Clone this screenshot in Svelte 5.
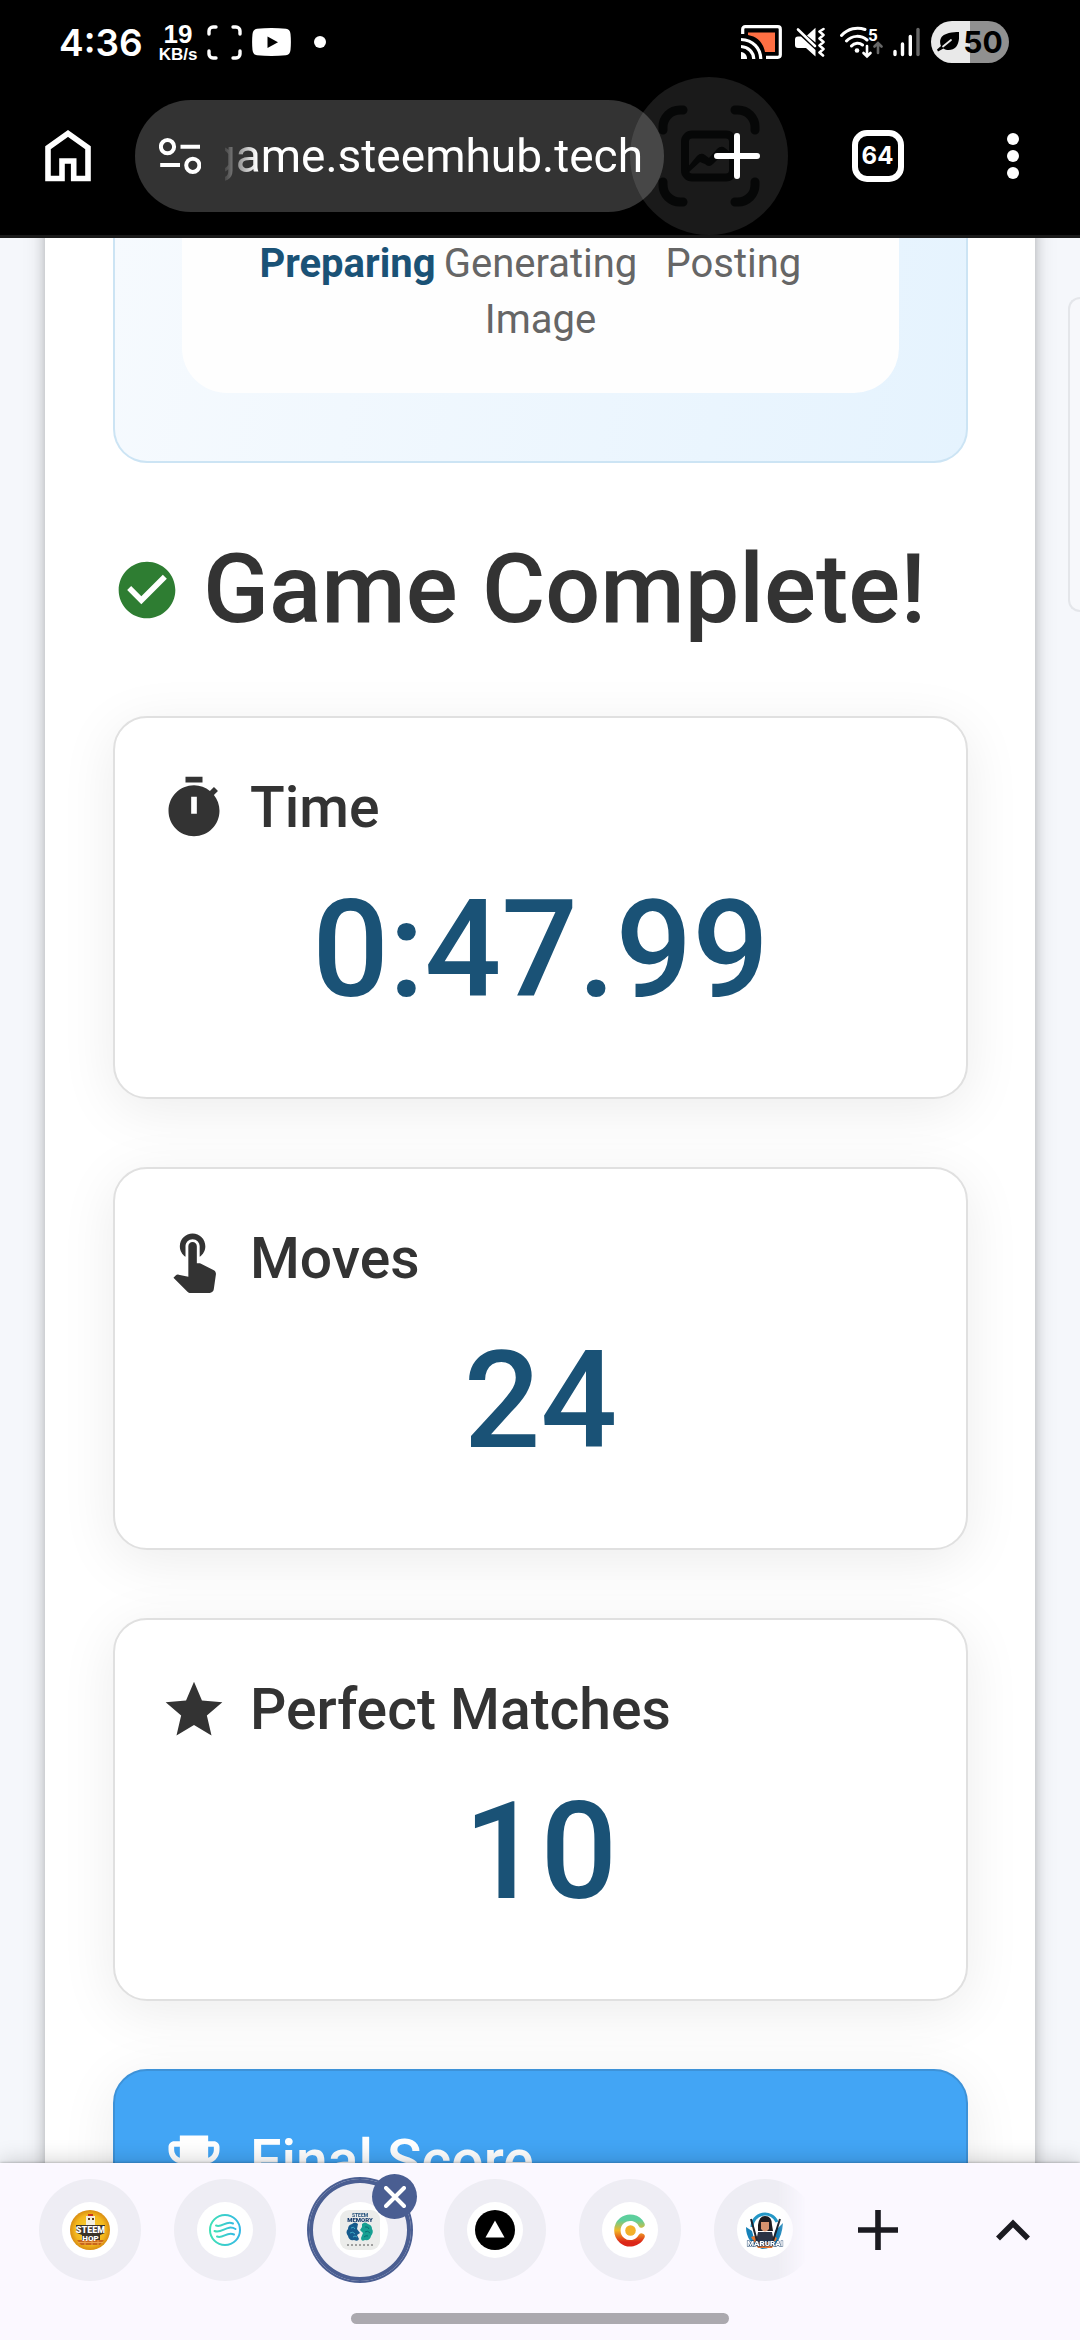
<script>
    let url = 'game.steemhub.tech';
    let openTabs = 64;

    const stats = [
        { icon: 'timer', label: 'Time', value: '0:47.99' },
        { icon: 'touch', label: 'Moves', value: '24' },
        { icon: 'star', label: 'Perfect Matches', value: '10' },
        { icon: 'trophy', label: 'Final Score', value: '', highlight: true }
    ];

    const paths = {
        timer: 'M9 1h6v2H9zM19.03 7.39l1.42-1.42c-.43-.51-.9-.99-1.41-1.41l-1.42 1.42C16.07 4.74 14.12 4 12 4c-4.97 0-9 4.03-9 9s4.02 9 9 9 9-4.03 9-9c0-2.12-.74-4.07-1.97-5.61zM13 14h-2V8h2z',
        touch: 'M9 11.24V7.5C9 6.12 10.12 5 11.5 5S14 6.12 14 7.5v3.74c1.21-.81 2-2.18 2-3.74C16 5.01 13.99 3 11.5 3S7 5.01 7 7.5c0 1.56.79 2.93 2 3.74zm9.84 4.63l-4.54-2.26c-.17-.07-.35-.11-.54-.11H13v-6c0-.83-.67-1.5-1.5-1.5S10 6.67 10 7.5v10.74l-3.43-.72c-.08-.01-.15-.03-.24-.03-.31 0-.59.13-.79.33l-.79.8 4.94 4.94c.27.27.65.44 1.06.44h6.79c.75 0 1.33-.55 1.44-1.28l.75-5.27c.01-.07.02-.14.02-.2 0-.62-.38-1.16-.91-1.38z',
        star: 'M12 17.27L18.18 21l-1.64-7.03L22 9.24l-7.19-.61L12 2 9.19 8.63 2 9.24l5.46 4.73L5.82 21z',
        trophy: 'M19 5h-2V3H7v2H5c-1.1 0-2 .9-2 2v1c0 2.55 1.92 4.63 4.39 4.94.63 1.5 1.98 2.63 3.61 2.96V19H7v2h10v-2h-4v-3.1c1.63-.33 2.98-1.46 3.61-2.96C19.08 12.63 21 10.55 21 8V7c0-1.1-.9-2-2-2zM5 8V7h2v3.82C5.84 10.4 5 9.3 5 8zm14 0c0 1.3-.84 2.4-2 2.82V7h2v1z',
        check: 'M12 2C6.48 2 2 6.48 2 12s4.48 10 10 10 10-4.48 10-10S17.52 2 12 2zm-2 15l-5-5 1.41-1.41L10 14.17l7.59-7.59L19 8l-9 9z'
    };

    const tabs = ['hop', 'waves', 'memory', 'triangle', 'ring', 'samurai'];
    let active = 'memory';
</script>

<div class="screen">
    <header>
        <div class="status">
            <span class="clock">4:36</span>
            <span class="speed"><b>19</b><span>KB/s</span></span>
            <svg class="corners" width="35" height="35" viewBox="0 0 35 35" fill="none" stroke="#fff" stroke-width="3.4" stroke-linecap="round">
                <path d="M2 9V6a4 4 0 0 1 4-4h3M26 2h3a4 4 0 0 1 4 4v3M33 26v3a4 4 0 0 1-4 4h-3M9 33H6a4 4 0 0 1-4-4v-3" />
            </svg>
            <svg class="video" width="39" height="28" viewBox="0 0 39 28">
                <path fill="#fff" d="M5 .8Q19.500-.8 34 .8Q38 1.200 38.500 6Q39.300 14 38.500 22Q38 26.800 34 27.200Q19.500 28.800 5 27.200Q1 26.800 .5 22Q-.3 14 .5 6Q1 1.200 5 .8z" />
                <path d="M15.500 8.500v11.500L26 14.200z" />
            </svg>
            <span class="dot"></span>
            <span class="spacer"></span>
            <svg class="cast" width="41" height="34" viewBox="0 0 41 34" fill="none" stroke="#fff" stroke-width="3.2">
                <path d="M1.700 9V4.200A2.500 2.500 0 0 1 4.200 1.700H36.800A2.500 2.500 0 0 1 39.300 4.200V29.800A2.500 2.500 0 0 1 36.800 32.300H25" />
                <path fill="#ff6f43" stroke="none" d="M7 7.500H34V27H24C22 17 16 11.500 7 10z" />
                <path d="M0 14.500C12 15 19.500 23 19.800 34M0 21.500C7.500 22 12.500 27 12.800 34" />
                <path fill="#fff" stroke="none" d="M0 27C4 27.500 6 30 6 34H0z" />
            </svg>
            <svg class="mute" width="31" height="30" viewBox="0 0 31 30">
                <path fill="#fff" d="M0 12.500Q0 9.500 3 9.500H6L20.500 23V29.500L11 21H3Q0 21 0 18z" />
                <path fill="#fff" d="M12 8.500L20.500 .8V15.500z" />
                <path fill="none" stroke="#fff" stroke-width="2.600" stroke-linecap="round" d="M3 2.500L20 19" />
                <path fill="none" stroke="#fff" stroke-width="2.600" stroke-linejoin="round" stroke-linecap="round" d="M28.500 2L24.500 4.500L28.500 8L24.500 11.500L28.500 15L24.500 18.500L28.500 22L24.500 25.500L28 28.500" />
            </svg>
            <svg class="wifi" width="43" height="33" viewBox="0 0 43 33" fill="none" stroke="#fff" stroke-width="3" stroke-linecap="round">
                <path d="M1.500 9.500C8 2.500 17 .5 25 3.500M6.500 15C12 9 21 9 27 14M11.500 20C14.500 16.500 19.500 16.500 22.500 19" />
                <circle cx="17" cy="24.500" r="2.300" fill="#fff" stroke="none" />
                <path stroke-width="2.600" d="M27 20V30M23.500 27L27 30.500L30.500 27" />
                <path stroke="#666" stroke-width="2.600" d="M38 27V18M34.500 20.500L38 17L41.500 20.500" />
                <text x="28" y="15" fill="#fff" stroke="none" font-size="17" font-weight="700">5</text>
            </svg>
            <svg class="signal" width="27" height="30" viewBox="0 0 27 30" stroke="#fff" stroke-width="3.4" stroke-linecap="round">
                <path d="M2 24.500V27.500M9.500 17V27.500M17.300 9.500V27.500" />
                <path stroke="#666" d="M25 2.500V27.500" />
            </svg>
            <span class="battery">
                <svg width="22" height="20" viewBox="0 0 22 20">
                    <path d="M22 0C21 0 9 0 5 4.500C2.500 7.500 2.800 11.500 4 14L0 17.500L1 19.500L6.500 16.500C10 19 16 18.500 19 15C22 11.500 22.500 5 22 0z" />
                    <path fill="none" stroke="#e9e9e9" stroke-width="1.800" stroke-linecap="round" d="M6 14.500L14 8" />
                </svg>
                50
            </span>
        </div>

        <nav class="toolbar">
            <button class="tool" aria-label="Home">
                <svg width="46" height="52" viewBox="0 0 46 52" fill="none" stroke="#fff" stroke-width="5.6">
                    <path d="M3 48.500V17.800L23 3.500L43 17.800V48.500H28.700V31H17V48.500z" />
                </svg>
            </button>
            <div class="address">
                <button class="site" aria-label="Site information">
                    <svg width="42" height="36" viewBox="0 0 42 36" fill="none" stroke="#fff" stroke-width="4">
                        <circle cx="8.500" cy="8.700" r="6.600" />
                        <circle cx="33.800" cy="27.300" r="6.600" />
                        <path d="M21.500 8.700H41M1.200 27H21" />
                    </svg>
                </button>
                <input aria-label="Address" dir="rtl" bind:value={url}>
            </div>
            <button class="tool new" aria-label="New tab">
                <span class="capture">
                    <svg width="102" height="102" viewBox="0 0 102 102" fill="none" stroke="#060707" stroke-width="9" stroke-linecap="round">
                        <path d="M5 25V22A17 17 0 0 1 22 5H25M77 5H80A17 17 0 0 1 97 22V25M97 77V80A17 17 0 0 1 80 97H77M25 97H22A17 17 0 0 1 5 80V77" />
                        <rect x="27" y="29.500" width="48" height="43" rx="7" stroke-width="8" />
                        <path fill="#060707" stroke="none" d="M29 63L39 51Q43 47 47 50L51 53L59 44Q63 40 67 43L76 50V52L65 49L55 59Q51 63 47 59L42 57L31 67z" />
                    </svg>
                </span>
                <svg class="plus" width="46" height="46" viewBox="0 0 46 46" stroke="#fff" stroke-width="6" stroke-linecap="round">
                    <path d="M23 3V43M3 23H43" />
                </svg>
            </button>
            <button class="tool" aria-label="Open tabs"><span class="count">{openTabs}</span></button>
            <button class="tool" aria-label="Menu">
                <svg width="12" height="48" viewBox="0 0 12 48" fill="#fff">
                    <circle cx="6" cy="7" r="6" /><circle cx="6" cy="24" r="6" /><circle cx="6" cy="41" r="6" />
                </svg>
            </button>
        </nav>
    </header>

    <main>
        <section class="game">
            <div class="panel">
                <div class="steps">
                    <span class="current">Preparing</span>
                    <span>Generating Image</span>
                    <span>Posting</span>
                </div>
            </div>

            <h1>
                <svg class="icon done" viewBox="0 0 24 24"><path d={paths.check} /></svg>
                Game Complete!
            </h1>

            {#each stats as stat}
                <article class="card" class:highlight={stat.highlight}>
                    <h2>
                        <svg class="icon" viewBox="0 0 24 24"><path d={paths[stat.icon]} /></svg>
                        {stat.label}
                    </h2>
                    <p>{stat.value}</p>
                </article>
            {/each}
        </section>
        <aside></aside>
    </main>

    <footer>
        <div class="strip">
            <div class="tabs">
                {#each tabs as tab}
                    <button class="tab" class:active={tab == active} aria-label={tab} on:click={() => active = tab}>
                        <span class="favicon">
                            <svg width="40" height="40" viewBox="0 0 40 40">
                                {#if tab == 'hop'}
                                    <defs>
                                        <radialGradient id="gold">
                                            <stop offset="0" stop-color="#f7d63c" /><stop offset=".75" stop-color="#f3b71d" /><stop offset="1" stop-color="#d98d12" />
                                        </radialGradient>
                                    </defs>
                                    <circle cx="20" cy="20" r="20" fill="url(#gold)" />
                                    <path fill="#c9341f" d="M18 4h5v3h-5z" />
                                    <path fill="#f4efe0" d="M16 6h9v9h-9z" />
                                    <path fill="#59401c" d="M18 8h2v2h-2zM22 8h2v2h-2z" />
                                    <path fill="#3a3329" d="M6 15h29v8l-5 2v6H12v-6l-5-2z" />
                                    <path fill="#c9661b" d="M7 30h27l-4 5H11z" />
                                    <path stroke="#eda24a" d="M8 32.500H33M15 30v5M22 30v5M28 30v5" />
                                    <text x="20.500" y="23" font-size="9" font-weight="900" fill="#fff" text-anchor="middle">STEEM</text>
                                    <text x="20.500" y="30.500" font-size="8" font-weight="900" fill="#fff" text-anchor="middle">HOP</text>
                                {:else if tab == 'waves'}
                                    <defs>
                                        <linearGradient id="aqua"><stop offset="0" stop-color="#3fe0b5" /><stop offset="1" stop-color="#35b9e6" /></linearGradient>
                                    </defs>
                                    <g fill="none" stroke="url(#aqua)" stroke-width="2" stroke-linecap="round">
                                        <circle cx="20" cy="20" r="15" />
                                        <path d="M11 15.500C17 18 21 10 28 13.500M9.500 21C17 24 22 14 30.500 19M12 26.500C18 29 22 21 29 24.500" />
                                    </g>
                                {:else if tab == 'memory'}
                                    <rect width="40" height="40" rx="9" fill="#ebecea" />
                                    <text x="20" y="7" font-size="5" font-weight="700" fill="#1c4c78" text-anchor="middle">STEEM</text>
                                    <text x="20" y="12" font-size="6" font-weight="900" fill="#173c6b" text-anchor="middle">MEMORY</text>
                                    <path fill="#145a8c" d="M18 14Q15 11 12 14Q8 15 8 19Q5 22 8 26Q9 31 14 30Q18 32 19 29L17 25L20 23L17 19z" />
                                    <path fill="#17a092" d="M22 14Q25 11 28 14Q32 15 32 19Q34 22 31 26Q30 31 25 30Q21 32 21 28L23 23L20 20L22 17z" />
                                    <path fill="none" stroke="#3ca7c7" d="M11 18q3-2 4 1M10 23q3-2 5 1M13 27q2-2 4 0" />
                                    <path fill="none" stroke="#0c6f74" d="M25 17q3-1 4 2M25 22q3-2 5 1M24 27q2-2 4-1" />
                                    <path stroke="#555" stroke-dasharray="2 2" d="M7 35H33" />
                                {:else if tab == 'triangle'}
                                    <circle cx="20" cy="20" r="20" />
                                    <path fill="#fff" d="M20 10.500L29.500 27.500H10.500z" />
                                {:else if tab == 'ring'}
                                    <defs>
                                        <linearGradient id="sun" x2="0" y2="1">
                                            <stop offset=".1" stop-color="#5dcf9d" /><stop offset=".5" stop-color="#f2b625" /><stop offset=".95" stop-color="#dc2618" />
                                        </linearGradient>
                                    </defs>
                                    <path fill="none" stroke="url(#sun)" stroke-width="6.400" stroke-linecap="round" d="M31.500 14.500A12.800 12.800 0 1 0 31.500 26.500" />
                                    <circle cx="20.500" cy="20.500" r="5.300" fill="#f3b02a" />
                                {:else}
                                    <path fill="none" stroke="#2597c6" stroke-width="3" d="M7 17A13 13 0 0 1 32 12" />
                                    <path fill="#1681b8" d="M1 17Q1 33 17 39Q36 39 38 13L30 21Q29 32 20 33Q8 31 7 21z" />
                                    <path fill="#e8742b" d="M6 27Q13 24 19 29Q27 24 32 28L27 38H13z" />
                                    <path fill="#1d1a1f" d="M13 15Q14 6 20 6Q27 6 27 15L28 21H13z" />
                                    <path fill="#d6926f" d="M16 12h8v7q-4 5-8 0z" />
                                    <path fill="#2b3345" d="M13 22h14l2 10H11z" />
                                    <path stroke="#1e222d" stroke-width="2" d="M6 9L12 31M35 9L28 31" />
                                    <text x="20" y="36" font-size="8" font-weight="900" fill="#fff" stroke="#123a66" stroke-width="1" paint-order="stroke" text-anchor="middle">MARURAI</text>
                                {/if}
                            </svg>
                        </span>
                        {#if tab == active}
                            <span class="close">
                                <svg width="22" height="22" viewBox="0 0 22 22" stroke="#fff" stroke-width="4" stroke-linecap="round"><path d="M2 2L20 20M20 2L2 20" /></svg>
                            </span>
                        {/if}
                    </button>
                {/each}
            </div>
            <button class="tool" aria-label="Add tab">
                <svg width="40" height="40" viewBox="0 0 40 40" stroke="#1b1b21" stroke-width="5.6"><path d="M20 0V40M0 20H40" /></svg>
            </button>
            <button class="tool" aria-label="Show tab list">
                <svg width="34" height="22" viewBox="0 0 34 22" fill="none" stroke="#1b1b21" stroke-width="5.6"><path d="M2 19.500L17 4.500L32 19.500" /></svg>
            </button>
        </div>
        <div class="handle"></div>
    </footer>
</div>

<style>
:global(body) {
    margin: 0;
    background: #f5f7fb;
}

.screen {
    display: flex;
    flex-direction: column;
    height: 100vh;
    overflow: hidden;
    font-family: Roboto, "Noto Sans", sans-serif;
    color: #333;
}

button {
    border: 0;
    padding: 0;
    background: none;
    font-family: inherit;
}

svg {
    display: block;
    flex: none;
}

/* status bar and browser toolbar */
header {
    flex: none;
    background: #000;
    color: #fff;
    padding-bottom: 7px;
    border-bottom: 3px solid #1a1a1a;
}

.status {
    display: flex;
    align-items: center;
    height: 84px;
    padding: 0 71px 0 59px;
}

.clock {
    font: 600 37px/1 Inter, sans-serif;
}

.speed {
    display: flex;
    flex-direction: column;
    align-items: center;
    margin-left: 16px;
    font: 700 17px/17px "Liberation Sans", sans-serif;
}

.speed b {
    font-size: 26px;
    line-height: 24px;
}

.corners {
    margin-left: 10px;
}

.video {
    margin-left: 10px;
}

.dot {
    width: 12px;
    height: 12px;
    margin-left: 23px;
    border-radius: 50%;
    background: #fff;
}

.spacer {
    flex: 1;
}

.mute {
    margin-left: 13px;
}

.wifi {
    margin-left: 14px;
}

.signal {
    margin-left: 10px;
}

.battery {
    display: flex;
    align-items: center;
    justify-content: center;
    gap: 4px;
    width: 78px;
    height: 42px;
    margin-left: 11px;
    border-radius: 21px;
    background: linear-gradient(90deg, #e9e9e9 50%, #909090 50%);
    color: #000;
    font: 700 30px/1 Inter, sans-serif;
}

.toolbar {
    display: flex;
    align-items: center;
    height: 144px;
}

.tool {
    display: flex;
    align-items: center;
    justify-content: center;
    flex: none;
    width: 135px;
    height: 134px;
}

.address {
    flex: 1;
    min-width: 0;
    display: flex;
    align-items: center;
    height: 112px;
    padding: 0 21px 0 24px;
    box-sizing: border-box;
    border-radius: 56px;
    background: #333;
}

.address input {
    flex: 1;
    min-width: 0;
    margin-left: 24px;
    padding: 0;
    border: 0;
    outline: none;
    background: none;
    color: #fff;
    font: 400 46px/60px Roboto, sans-serif;
    text-align: right;
    mask-image: linear-gradient(90deg, rgba(0, 0, 0, .1), #000 32px);
}

.new {
    position: relative;
    width: 146px;
}

.plus {
    position: relative;
}

/* floating screenshot bubble, lies over the address bar */
.capture {
    position: absolute;
    left: -34px;
    top: -12px;
    display: flex;
    align-items: center;
    justify-content: center;
    width: 158px;
    height: 158px;
    border-radius: 50%;
    background: rgba(255, 255, 255, .1);
}

.count {
    display: flex;
    align-items: center;
    justify-content: center;
    width: 52px;
    height: 52px;
    box-sizing: border-box;
    border: 6px solid #fff;
    border-radius: 15px;
    color: #fff;
    font: 700 24px/1 Inter, sans-serif;
}

/* page */
main {
    flex: 1;
    min-height: 0;
    display: grid;
    grid-template-columns: minmax(0, 1fr) 45px;
    padding-left: 45px;
    overflow: hidden;
    align-items: start;
}

.game {
    margin-top: -60px;
    padding: 48px 67px 68px 68px;
    background: #fff;
    box-shadow: 0 8px 8px -6px rgba(0, 0, 0, .2), 0 8px 11px rgba(0, 0, 0, .18), 0 3px 22px rgba(0, 0, 0, .14);
}

aside {
    height: 311px;
    margin: 59px 0 0 33px;
    border: 2px solid #e4e6ea;
    border-right: 0;
    border-radius: 12px 0 0 12px;
    background: #f7f8fb;
}

.panel {
    padding: 0 67px 68px;
    border: 2px solid #cce4f4;
    border-top: 0;
    border-radius: 0 0 34px 34px;
    background: linear-gradient(100deg, #f6fafe, #e5f3fe);
}

.steps {
    display: grid;
    grid-template-columns: 1fr 210px 1fr;
    height: 157px;
    padding-top: 10px;
    border-radius: 0 0 45px 45px;
    background: #fefefe;
    color: #666;
    font-size: 40px;
    line-height: 56px;
    text-align: center;
}

.steps .current {
    color: #1a5276;
    font-weight: 700;
    text-align: right;
}

.steps span:last-child {
    padding-left: 20px;
    text-align: left;
}

.icon {
    width: 68px;
    height: 68px;
    fill: currentColor;
}

.icon.done {
    color: #2e7d32;
}

h1, h2 {
    display: flex;
    align-items: center;
    gap: 22px;
    margin: 0;
    font-weight: 500;
    white-space: nowrap;
}

h1 {
    margin: 68px 0;
    font-size: 97px;
    line-height: 117px;
}

h2 {
    font-size: 57px;
    line-height: 90px;
}

.card {
    margin-bottom: 68px;
    padding: 45px 45px 68px;
    border: 2px solid #e0e0e0;
    border-radius: 34px;
    background: #fff;
    box-shadow: 0 11px 56px rgba(0, 0, 0, .08);
}

.card p {
    height: 158px;
    margin: 18px 0 0;
    color: #1a5276;
    font-size: 135px;
    font-weight: 500;
    line-height: 158px;
    text-align: center;
}

.card.highlight {
    border-color: #3d92d8;
    background: #42a5f5;
    color: #fff;
}

/* bottom tab strip */
footer {
    position: relative;
    flex: none;
    padding-bottom: 16px;
    background: #fbf8ff;
    box-shadow: 0 0 3px rgba(0, 0, 0, .35), 0 -3px 20px rgba(0, 0, 0, .16);
}

.strip {
    display: flex;
    align-items: center;
}

.tabs {
    flex: 1;
    min-width: 0;
    display: flex;
    gap: 33px;
    padding: 16px 0 16px 39px;
    overflow: hidden;
    mask-image: linear-gradient(90deg, #000 calc(100% - 32px), transparent calc(100% - 4px));
}

.tab {
    position: relative;
    display: flex;
    align-items: center;
    justify-content: center;
    flex: none;
    width: 102px;
    height: 102px;
    border-radius: 50%;
    background: #eeedf4;
}

.tab.active {
    box-shadow: inset 0 0 0 4px #4a5e92, 0 0 0 2px #4a5e92;
}

.favicon {
    display: flex;
    align-items: center;
    justify-content: center;
    width: 56px;
    height: 56px;
    border-radius: 50%;
    background: #fff;
}

.close {
    position: absolute;
    top: -5px;
    right: -6px;
    display: flex;
    align-items: center;
    justify-content: center;
    width: 45px;
    height: 45px;
    border-radius: 50%;
    background: #4a5e92;
}

.handle {
    width: 35%;
    height: 11px;
    margin: 16px auto 0;
    border-radius: 6px;
    background: #aba9af;
}
</style>
